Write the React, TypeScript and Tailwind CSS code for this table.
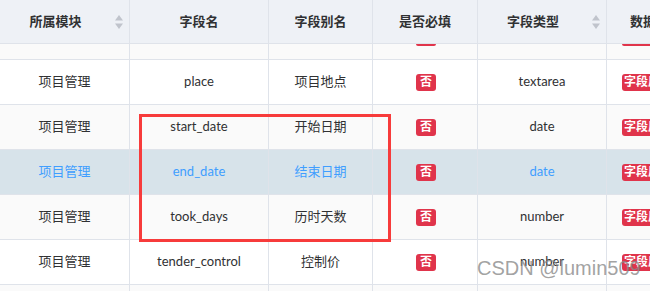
import React from "react";

type Row = {
  mod: string;
  name: string;
  alias: string;
  type: string;
  hl?: boolean;
  striped?: boolean;
};

const rows: Row[] = [
  { mod: "项目管理", name: "place", alias: "项目地点", type: "textarea" },
  { mod: "项目管理", name: "start_date", alias: "开始日期", type: "date", striped: true },
  { mod: "项目管理", name: "end_date", alias: "结束日期", type: "date", hl: true },
  { mod: "项目管理", name: "took_days", alias: "历时天数", type: "number", striped: true },
  { mod: "项目管理", name: "tender_control", alias: "控制价", type: "number" },
];

const font = { fontFamily: 'Lato, "Noto Sans CJK SC", sans-serif' };

function SortIcon() {
  return (
    <svg width="8" height="14" viewBox="0 0 8 14" className="absolute right-[6px] top-[15px]">
      <path d="M4 0 L8 5.5 L0 5.5 Z" fill="#c0c4cc" />
      <path d="M4 14 L8 8.5 L0 8.5 Z" fill="#c0c4cc" />
    </svg>
  );
}

function No() {
  return (
    <span className="inline-flex h-[17px] w-[20px] items-center justify-center rounded-[3px] bg-[#e0344b] text-[12px] font-bold leading-none text-white">
      否
    </span>
  );
}

function FieldBadge() {
  return (
    <span className="inline-flex h-[17px] items-center whitespace-nowrap rounded-[3px] bg-[#e0344b] px-[2px] text-[12px] font-bold leading-none text-white">
      字段属性
    </span>
  );
}

const cols = ["w-[130px]", "w-[139px]", "w-[104px]", "w-[105px]", "w-[129px]"];

export default function App() {
  return (
    <div className="relative h-[291px] w-[650px] overflow-hidden bg-white" style={font}>
      {/* header */}
      <div className="flex h-[44px] border-b border-[#dfe3ea] bg-[#eef1f6] text-[13px] font-bold text-[#303133]">
        <div className="relative flex w-[130px] shrink-0 items-center justify-center border-r border-[#dfe3ea] pr-[18px]">
          所属模块
          <SortIcon />
        </div>
        <div className="flex w-[139px] shrink-0 items-center justify-center border-r border-[#dfe3ea]">字段名</div>
        <div className="flex w-[104px] shrink-0 items-center justify-center border-r border-[#dfe3ea]">字段别名</div>
        <div className="flex w-[105px] shrink-0 items-center justify-center border-r border-[#dfe3ea]">是否必填</div>
        <div className="relative flex w-[129px] shrink-0 items-center justify-center border-r border-[#dfe3ea] pr-[18px]">
          字段类型
          <SortIcon />
        </div>
        <div className="flex flex-1 items-center overflow-hidden whitespace-nowrap pl-[23px]">数据来源</div>
      </div>

      {/* partial row */}
      <div className="flex h-[16px] border-b border-[#dfe3ea] bg-[#fafafa]">
        <div className={`${cols[0]} shrink-0 border-r border-[#dfe3ea]`} />
        <div className={`${cols[1]} shrink-0 border-r border-[#dfe3ea]`} />
        <div className={`${cols[2]} shrink-0 border-r border-[#dfe3ea]`} />
        <div className={`${cols[3]} flex shrink-0 justify-center border-r border-[#dfe3ea]`}>
          <div className="ml-[1px] h-[2px] w-[20px] rounded-b-[3px] bg-[#e0344b]" />
        </div>
        <div className={`${cols[4]} shrink-0 border-r border-[#dfe3ea]`} />
        <div className="flex-1 pl-[15px]">
          <div className="h-[2px] w-[40px] rounded-b-[3px] bg-[#e0344b]" />
        </div>
      </div>

      {rows.map((r, i) => {
        const bg = r.hl ? "bg-[#d7e3ea]" : r.striped ? "bg-[#fafafa]" : "bg-white";
        const tc = r.hl ? "text-[#409eff]" : "text-[#303133]";
        return (
          <div key={i} className={`flex h-[45px] border-b border-[#dfe3ea] text-[13px] ${bg} ${tc}`}>
            <div className={`${cols[0]} flex shrink-0 items-center justify-center border-r border-[#dfe3ea]`}>{r.mod}</div>
            <div className={`${cols[1]} flex shrink-0 items-center justify-center border-r border-[#dfe3ea]`}>{r.name}</div>
            <div className={`${cols[2]} flex shrink-0 items-center justify-center border-r border-[#dfe3ea]`}>{r.alias}</div>
            <div className={`${cols[3]} flex shrink-0 items-center justify-center border-r border-[#dfe3ea] pl-[2px]`}>
              <No />
            </div>
            <div className={`${cols[4]} flex shrink-0 items-center justify-center border-r border-[#dfe3ea]`}>{r.type}</div>
            <div className="flex flex-1 items-center overflow-hidden pl-[15px]">
              <FieldBadge />
            </div>
          </div>
        );
      })}

      <div className="flex h-[10px] bg-[#fafafa]">
        <div className={`${cols[0]} shrink-0 border-r border-[#dfe3ea]`} />
        <div className={`${cols[1]} shrink-0 border-r border-[#dfe3ea]`} />
        <div className={`${cols[2]} shrink-0 border-r border-[#dfe3ea]`} />
        <div className={`${cols[3]} shrink-0 border-r border-[#dfe3ea]`} />
        <div className={`${cols[4]} shrink-0 border-r border-[#dfe3ea]`} />
      </div>

      {/* red annotation box */}
      <div className="absolute left-[139px] top-[114px] h-[128px] w-[252px] border-[3px] border-[#f73b3b]" />

      {/* watermark */}
      <div
        className="absolute left-[477px] top-[258px] whitespace-nowrap text-[20px] leading-none text-[#8a8a8a]/80"
        style={{ fontFamily: '"Liberation Sans", Arial, sans-serif' }}
      >
        CSDN @lumin509
      </div>
    </div>
  );
}
